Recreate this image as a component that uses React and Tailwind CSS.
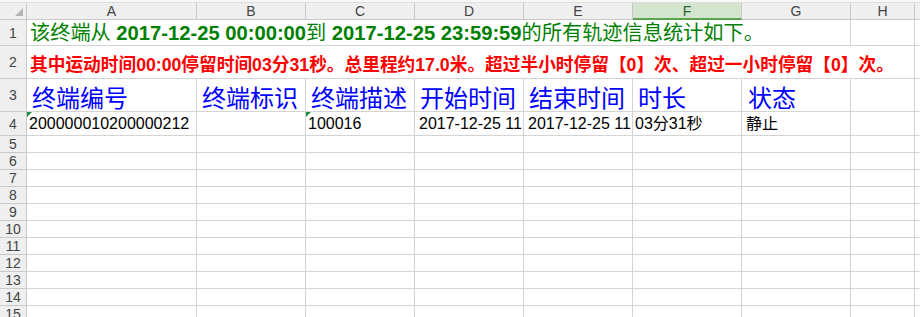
import React from "react";

const COLS = "grid grid-cols-[27px_170px_109px_109px_109px_109px_109px_109px_64px_1fr]";
const LETTERS = ["A", "B", "C", "D", "E", "F", "G", "H", ""];
const GRID = "border-[#d4d4d4]";

function RowHead({ n }) {
  return (
    <div className="flex items-center justify-center bg-[#efefef] border-r border-b border-[#c9c9c9] text-[14px] leading-none text-[#444]">
      {n}
    </div>
  );
}

function Tri() {
  return (
    <span className="absolute left-0 top-0 w-0 h-0 border-t-[5px] border-r-[5px] border-t-[#1f8a3a] border-r-transparent" />
  );
}

export default function App() {
  const emptyRows = [5, 6, 7, 8, 9, 10, 11, 12, 13, 14, 15];
  return (
    <div className="w-[920px] h-[317px] overflow-hidden bg-white font-['Liberation_Sans','Noto_Sans_CJK_SC',sans-serif]">
      <div className="h-[3px] bg-[#f7f7f7] border-b border-[#dedede]" />
      {/* column header */}
      <div className={`${COLS} h-[17px]`}>
        <div className="relative bg-[#efefef] border-r border-b border-[#c9c9c9]">
          <svg className="absolute left-[15px] top-[5px]" width="8" height="8" viewBox="0 0 8 8">
            <polygon points="8,0 8,8 0,8" fill="#b5b5b5" />
          </svg>
        </div>
        {LETTERS.map((l, i) =>
          l === "F" ? (
            <div key={i} className="flex items-center justify-center bg-[#d4e5cf] border-r border-[#c9c9c9] border-b-2 border-b-[#5aa44a] text-[14px] leading-none text-[#2f5f2f]">
              {l}
            </div>
          ) : (
            <div key={i} className={`flex items-center justify-center bg-[#efefef] border-b border-[#c9c9c9] text-[14px] leading-none text-[#444] ${i < 8 ? "border-r" : ""}`}>
              {l}
            </div>
          )
        )}
      </div>

      {/* row 1 */}
      <div className={`${COLS} h-[26px]`}>
        <RowHead n={1} />
        <div className={`flex items-end pl-[3px] pb-[2px] border-b ${GRID} whitespace-pre text-[20.2px] leading-none text-[#008000] font-bold`}>
          <span>
            <span className="font-normal">该终端从</span>
            {" 2017-12-25 00:00:00"}
            <span className="font-normal">到</span>
            {" 2017-12-25 23:59:59"}
            <span className="font-normal">的所有轨迹信息统计如下。</span>
          </span>
        </div>
        <div className={`border-b ${GRID}`} />
        <div className={`border-b ${GRID}`} />
        <div className={`border-b ${GRID}`} />
        <div className={`border-b ${GRID}`} />
        <div className={`border-b ${GRID}`} />
        <div className={`border-b border-r ${GRID}`} />
        <div className={`border-b border-r ${GRID}`} />
        <div className={`border-b ${GRID}`} />
      </div>

      {/* row 2 */}
      <div className={`${COLS} h-[33px]`}>
        <RowHead n={2} />
        <div className={`flex items-end pl-[3px] pb-[3px] border-b ${GRID} whitespace-nowrap text-[17.7px] leading-none text-[#ff0000] font-bold`}>
          其中运动时间00:00停留时间03分31秒。总里程约17.0米。超过半小时停留【0】次、超过一小时停留【0】次。
        </div>
        <div className={`border-b ${GRID}`} />
        <div className={`border-b ${GRID}`} />
        <div className={`border-b ${GRID}`} />
        <div className={`border-b ${GRID}`} />
        <div className={`border-b ${GRID}`} />
        <div className={`border-b ${GRID}`} />
        <div className={`border-b border-r ${GRID}`} />
        <div className={`border-b ${GRID}`} />
      </div>

      {/* row 3 */}
      <div className={`${COLS} h-[33px]`}>
        <RowHead n={3} />
        {["终端编号", "终端标识", "终端描述", "开始时间", "结束时间", "时长", "状态", "", ""].map((t, i) => (
          <div
            key={i}
            className={`flex items-end ${i === 6 ? "pl-[6px]" : "pl-[5px]"} pb-0 border-b ${i < 8 ? "border-r" : ""} ${GRID} whitespace-nowrap overflow-hidden text-[24px] leading-none text-[#0000ff]`}
          >
            {t}
          </div>
        ))}
      </div>

      {/* row 4 */}
      <div className={`${COLS} h-[24px]`}>
        <RowHead n={4} />
        {[
          { t: "200000010200000212", tri: true, p: "pl-[2px]" },
          { t: "", p: "pl-[2px]" },
          { t: "100016", tri: true, p: "pl-[2px]" },
          { t: "2017-12-25 11:45:12", p: "pl-[4px]" },
          { t: "2017-12-25 11:48:43", p: "pl-[4px]" },
          { t: "03分31秒", p: "pl-[2px]" },
          { t: "静止", p: "pl-[4px]" },
          { t: "", p: "pl-[2px]" },
          { t: "", p: "pl-[2px]" },
        ].map((c, i) => (
          <div
            key={i}
            className={`relative flex items-end ${c.p} pb-[3px] border-b ${i < 8 ? "border-r" : ""} ${GRID} whitespace-nowrap overflow-hidden text-[16px] leading-none text-black`}
          >
            {c.tri && <Tri />}
            <span className="overflow-hidden">{c.t}</span>
          </div>
        ))}
      </div>

      {emptyRows.map((n) => (
        <div key={n} className={`${COLS} h-[17px]`}>
          <RowHead n={n} />
          {LETTERS.map((l, i) => (
            <div key={i} className={`border-b ${i < 8 ? "border-r" : ""} ${GRID}`} />
          ))}
        </div>
      ))}
    </div>
  );
}
